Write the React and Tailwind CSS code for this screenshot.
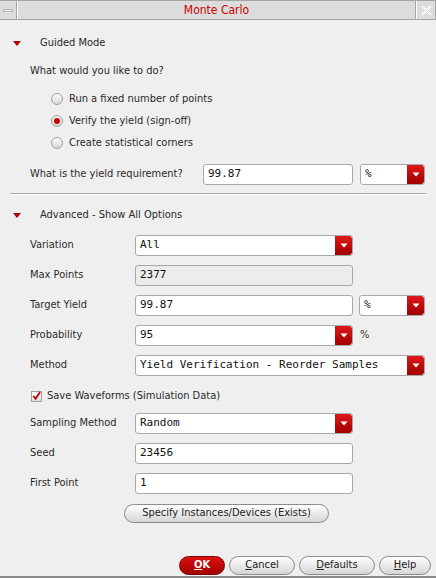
const ui = { fontFamily: '"DejaVu Sans Condensed", "DejaVu Sans", sans-serif', fontStretch: 'condensed' };
const mono = { fontFamily: '"DejaVu Sans Mono", monospace', fontStretch: 'normal' };

const Arrow = () => (
  <svg width="8" height="5" viewBox="0 0 8 5" className="block">
    <path d="M0 0 H8 L4 5 Z" fill="#b00000" />
  </svg>
);

const DropBtn = () => (
  <div className="w-[17px] h-full flex items-center justify-center rounded-r-[3px] bg-gradient-to-b from-[#e01818] to-[#a00000]">
    <svg width="8" height="5" viewBox="0 0 8 5">
      <path d="M0.5 0.5 H7.5 L4 4.5 Z" fill="#ffffff" />
    </svg>
  </div>
);

const Field = ({ value, width = 'w-[218px]', disabled }) => (
  <div
    className={`${width} h-[21px] rounded-[3px] border border-[#a8a8a8] flex items-center pl-[4px] text-[11px] text-[#111] ${disabled ? 'bg-[#ececec]' : 'bg-white'}`}
    style={mono}
  >
    {value}
  </div>
);

const Select = ({ value, width = 'w-[218px]' }) => (
  <div
    className={`${width} h-[21px] rounded-[3px] border border-[#a8a8a8] bg-white flex items-center text-[11px] text-[#111] overflow-hidden`}
    style={mono}
  >
    <span className="flex-1 pl-[4px]">{value}</span>
    <DropBtn />
  </div>
);

const Radio = ({ checked, label }) => (
  <div className="h-[20px] flex items-center pl-[51px]">
    <div className="w-[12px] h-[12px] rounded-full border border-[#a0a0a0] bg-gradient-to-b from-[#fafafa] to-[#d8d8d8] flex items-center justify-center">
      {checked && <div className="w-[6px] h-[6px] rounded-full bg-[#d00000]" />}
    </div>
    <span className="ml-[6px]">{label}</span>
  </div>
);

const Row = ({ label, children }) => (
  <div className="h-[21px] flex items-center">
    <span className="w-[135px] pl-[30px] shrink-0">{label}</span>
    {children}
  </div>
);

const Pill = ({ children, className = '' }) => (
  <div
    className={`h-[19px] rounded-full border border-[#8c8c8c] bg-gradient-to-b from-[#ffffff] to-[#d6d6d6] flex items-center justify-center text-[11px] text-[#222] ${className}`}
  >
    {children}
  </div>
);

export default function App() {
  return (
    <div className="w-[436px] h-[578px] bg-[#efefef] flex flex-col text-[11px] text-[#2a2a2a]" style={ui}>
      {/* title bar */}
      <div className="h-[20px] flex border-t border-b border-[#a4a4a4] bg-[#dcdcdc] shrink-0">
        <div className="w-[17px] flex items-center justify-center border-r border-[#a4a4a4]">
          <div className="w-[10px] h-[3px] bg-white border border-[#b4b4b4]" />
        </div>
        <div className="w-[1px] bg-white" />
        <div className="flex-1 flex items-center justify-center text-[12px] text-[#cc0000]">Monte Carlo</div>
        <div className="w-[1px] bg-[#a4a4a4]" />
        <div className="w-[1px] bg-white" />
        <div className="w-[19px] flex items-center justify-center border-r border-[#a4a4a4]">
          <svg width="11" height="11" viewBox="0 0 11 11">
            <path d="M1 1 L10 10 M10 1 L1 10" stroke="#ffffff" strokeWidth="2.2" />
            <path d="M1 1 L10 10 M10 1 L1 10" stroke="#c8c8c8" strokeWidth="0.8" strokeDasharray="1 1" />
          </svg>
        </div>
      </div>

      <div className="h-[20px] mt-[13px] flex items-center">
        <div className="w-[40px] pl-[13px]"><Arrow /></div>
        <span>Guided Mode</span>
      </div>

      <div className="h-[20px] mt-[8px] flex items-center pl-[30px]">What would you like to do?</div>

      <div className="mt-[8px] flex flex-col gap-[2px]">
        <Radio label="Run a fixed number of points" />
        <Radio checked label="Verify the yield (sign-off)" />
        <Radio label="Create statistical corners" />
      </div>

      <div className="h-[21px] mt-[11px] flex items-center">
        <span className="w-[203px] pl-[30px] shrink-0">What is the yield requirement?</span>
        <Field value="99.87" width="w-[150px]" />
        <div className="w-[7px]" />
        <Select value="%" width="w-[65px]" />
      </div>

      <div className="mx-[10px] mt-[8px] h-[2px] border-t border-[#a8a8a8] border-b border-b-white" />

      <div className="h-[20px] mt-[10px] flex items-center">
        <div className="w-[40px] pl-[13px]"><Arrow /></div>
        <span>Advanced - Show All Options</span>
      </div>

      <div className="mt-[10px] flex flex-col gap-[9px]">
        <Row label="Variation"><Select value="All" /></Row>
        <Row label="Max Points"><Field value="2377" disabled /></Row>
        <Row label="Target Yield">
          <Field value="99.87" />
          <div className="w-[6px]" />
          <Select value="%" width="w-[66px]" />
        </Row>
        <Row label="Probability">
          <Select value="95" />
          <span className="ml-[7px] text-[#333]">%</span>
        </Row>
        <Row label="Method"><Select value="Yield Verification - Reorder Samples" width="w-[290px]" /></Row>
      </div>

      <div className="h-[20px] mt-[10px] flex items-center pl-[31px]">
        <div className="w-[11px] h-[11px] border border-[#a0a0a0] bg-gradient-to-b from-white to-[#e0e0e0] flex items-center justify-center">
          <svg width="10" height="10" viewBox="0 0 10 10">
            <path d="M1.5 5 L4 8 L9 0.5" stroke="#c00000" strokeWidth="2" fill="none" />
          </svg>
        </div>
        <span className="ml-[5px]">Save Waveforms (Simulation Data)</span>
      </div>

      <div className="mt-[7px] flex flex-col gap-[9px]">
        <Row label="Sampling Method"><Select value="Random" /></Row>
        <Row label="Seed"><Field value="23456" /></Row>
        <Row label="First Point"><Field value="1" /></Row>
      </div>

      <div className="mt-[10px] flex pl-[124px]">
        <Pill className="w-[205px]">Specify Instances/Devices (Exists)</Pill>
      </div>

      <div className="flex-1" />

      <div className="flex justify-end gap-[4px] pr-[5px] mb-[1px]">
        <div className="w-[46px] h-[19px] rounded-full border border-[#7a0000] bg-gradient-to-b from-[#e01010] to-[#a00000] flex items-center justify-center text-white font-bold text-[11px]">
          <span className="underline">O</span>K
        </div>
        <Pill className="w-[66px]"><span className="underline">C</span>ancel</Pill>
        <Pill className="w-[76px]"><span className="underline">D</span>efaults</Pill>
        <Pill className="w-[52px]"><span className="underline">H</span>elp</Pill>
      </div>

      <div className="h-[2px] bg-[#8a8a8a]" />
    </div>
  );
}
